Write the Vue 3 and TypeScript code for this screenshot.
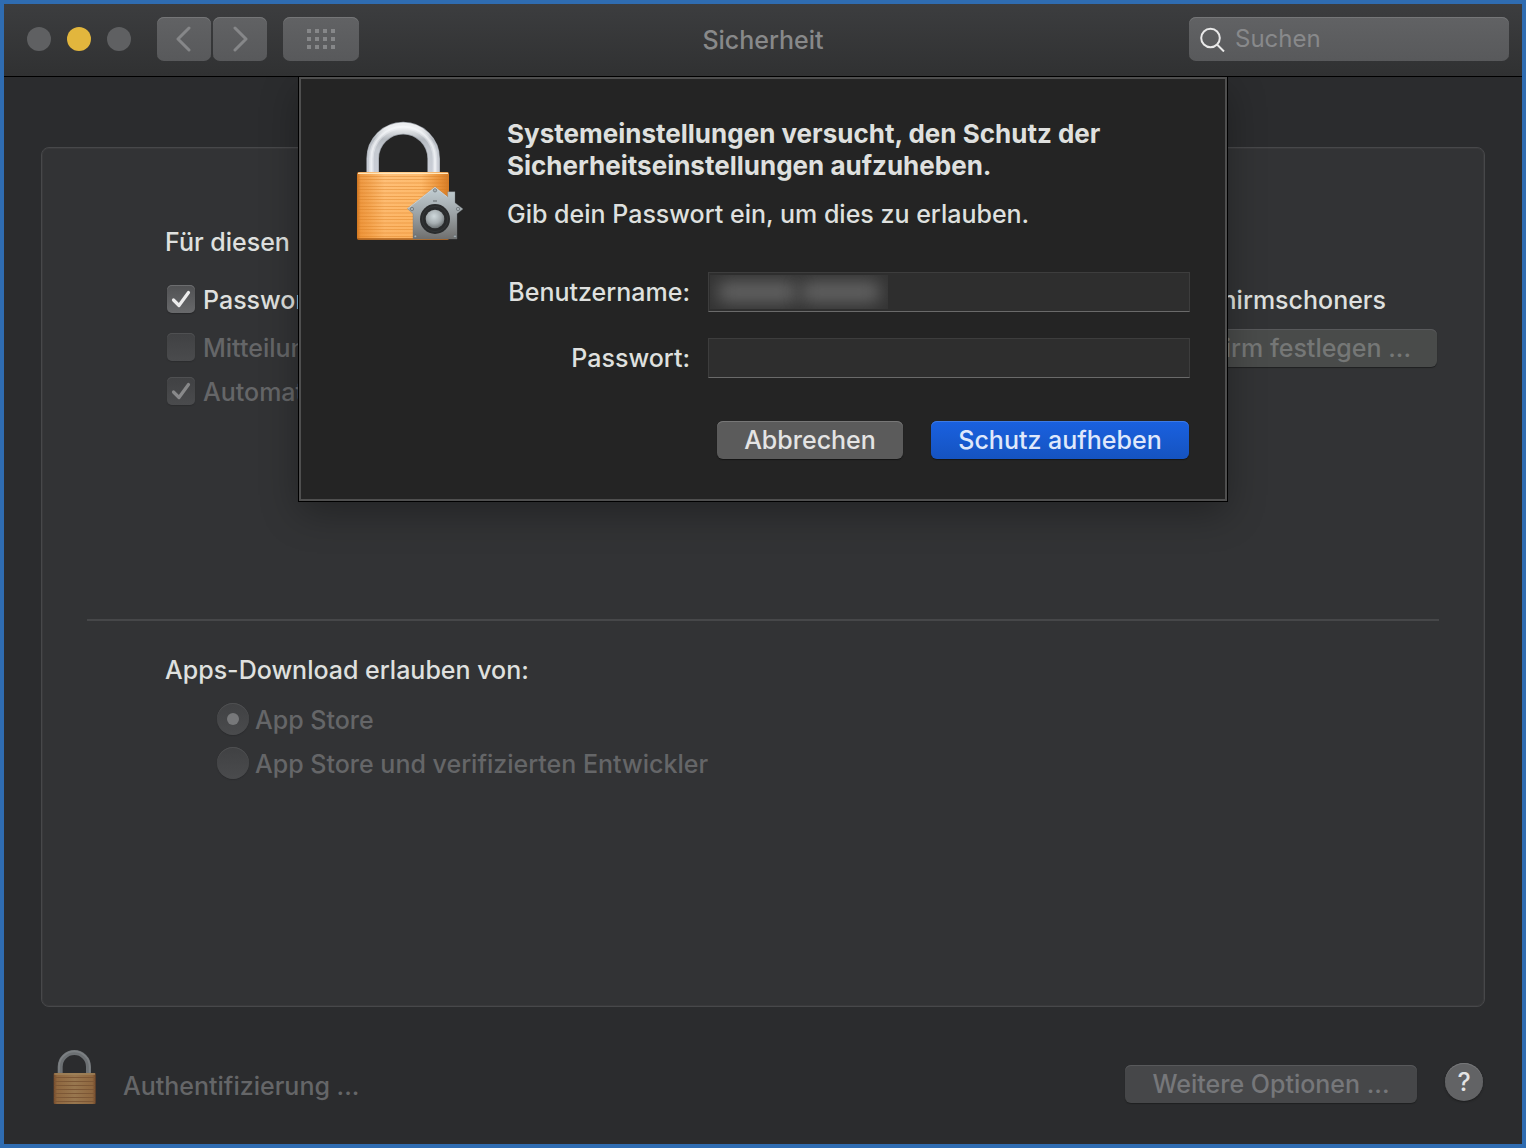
<script setup lang="ts">
import { ref } from 'vue'

interface Option {
  id: string
  label: string
}

const query = ref('')
const password = ref('')
const requirePassword = ref(true)
const showMessage = ref(false)
const autoLogin = ref(true)
const source = ref('store')

const sources: Option[] = [
  { id: 'store', label: 'App Store' },
  { id: 'verified', label: 'App Store und verifizierten Entwickler' },
]

const gridDots: { x: number; y: number }[] = []
for (const y of [0, 8, 16]) {
  for (const x of [0, 8, 16, 24]) gridDots.push({ x, y })
}

const grooves = Array.from({ length: 19 }, (_, i) => 228 + i * 10)
const smallGrooves = Array.from({ length: 7 }, (_, i) => 291 + i * 12)
</script>

<template>
  <div class="window">
    <header class="titlebar">
      <div class="left">
        <div class="lights">
          <button class="light" type="button" aria-label="Schließen"></button>
          <button class="light yellow" type="button" aria-label="Minimieren"></button>
          <button class="light" type="button" aria-label="Zoomen"></button>
        </div>
        <div class="nav">
          <button class="tool" type="button" aria-label="Zurück">
            <svg width="16" height="26" viewBox="0 0 16 26"><path d="M13 2 2 13l11 11" /></svg>
          </button>
          <button class="tool" type="button" aria-label="Vor">
            <svg width="16" height="26" viewBox="0 0 16 26"><path d="M3 2l11 11L3 24" /></svg>
          </button>
        </div>
        <button class="tool wide" type="button" aria-label="Alle einblenden">
          <svg width="28" height="20" viewBox="0 0 28 20">
            <rect v-for="(d, i) in gridDots" :key="i" :x="d.x" :y="d.y" width="4" height="4" />
          </svg>
        </button>
      </div>
      <h1 class="title">Sicherheit</h1>
      <label class="search">
        <svg width="26" height="26" viewBox="0 0 26 26"><circle cx="11.500" cy="12" r="9.300" /><path d="M18 18.500l7 7" /></svg>
        <input v-model="query" type="search" placeholder="Suchen" aria-label="Suchen" />
      </label>
    </header>

    <main class="content">
      <section class="panel">
        <h2 class="heading">Für diesen</h2>
        <div class="row first">
          <label class="option">
            <input v-model="requirePassword" type="checkbox" />
            <span>Passwort</span>
          </label>
          <span class="trailing">Bildschirmschoners</span>
        </div>
        <div class="row message">
          <label class="option disabled">
            <input v-model="showMessage" type="checkbox" disabled />
            <span>Mitteilung</span>
          </label>
          <button class="push green" type="button" disabled>Bildschirm festlegen ...</button>
        </div>
        <div class="row">
          <label class="option disabled">
            <input v-model="autoLogin" type="checkbox" disabled />
            <span>Automatisch</span>
          </label>
        </div>

        <hr />

        <h2 class="heading">Apps-Download erlauben von:</h2>
        <div class="sources">
          <label v-for="s in sources" :key="s.id" class="option disabled">
            <input v-model="source" type="radio" name="source" :value="s.id" disabled />
            <span>{{ s.label }}</span>
          </label>
        </div>
      </section>

      <footer class="footer">
        <svg class="smalllock" width="50" height="56" viewBox="150 204 150 168">
          <defs>
            <linearGradient id="smallBody" x1="0" x2="1" y1="0" y2="0">
              <stop offset="0" stop-color="#74492a" />
              <stop offset="0.080" stop-color="#8f673f" />
              <stop offset="0.500" stop-color="#98774f" />
              <stop offset="0.920" stop-color="#8f673f" />
              <stop offset="1" stop-color="#74492a" />
            </linearGradient>
          </defs>
          <path d="M180.500 280V260A42.500 42.500 0 0 1 265.500 260V280" fill="none" stroke="#6c7073" stroke-width="15" />
          <path d="M177 278V260A46 46 0 0 1 269 260V278" fill="none" stroke="#7c8083" stroke-width="5" />
          <rect x="161" y="279" width="126" height="93" rx="3" fill="url(#smallBody)" />
          <rect x="163" y="280" width="122" height="4" fill="#a0855d" />
          <rect v-for="y in smallGrooves" :key="y" x="163" :y="y" width="122" height="3" fill="#7c5736" />
        </svg>
        <span class="status">Authentifizierung ...</span>
        <button class="push more" type="button" disabled>Weitere Optionen ...</button>
        <button class="help" type="button" aria-label="Hilfe">?</button>
      </footer>

      <form class="sheet" role="dialog" aria-labelledby="sheet-title" @submit.prevent>
        <svg class="lock" width="120" height="130" viewBox="60 54 360 390">
          <defs>
            <linearGradient id="body" x1="0" x2="1" y1="0" y2="0">
              <stop offset="0" stop-color="#c8701f" />
              <stop offset="0.040" stop-color="#ee9a45" />
              <stop offset="0.120" stop-color="#f3a553" />
              <stop offset="0.300" stop-color="#ffc17a" />
              <stop offset="0.700" stop-color="#ffbd70" />
              <stop offset="0.900" stop-color="#e9923a" />
              <stop offset="1" stop-color="#d27a27" />
            </linearGradient>
            <linearGradient id="shade" x1="0" x2="0" y1="0" y2="1">
              <stop offset="0" stop-color="#f28f20" stop-opacity="0" />
              <stop offset="1" stop-color="#f08a20" stop-opacity="0.250" />
            </linearGradient>
            <linearGradient id="shackle" x1="0" x2="0" y1="0" y2="1">
              <stop offset="0" stop-color="#eceef0" />
              <stop offset="0.250" stop-color="#b4b9bf" />
              <stop offset="0.500" stop-color="#c5cad1" />
              <stop offset="1" stop-color="#c9cdd6" />
            </linearGradient>
            <linearGradient id="house" x1="0" x2="0" y1="0" y2="1">
              <stop offset="0" stop-color="#c4d0d5" />
              <stop offset="0.500" stop-color="#9ea5a8" />
              <stop offset="1" stop-color="#6f6f6e" />
            </linearGradient>
            <radialGradient id="knob" cx="0.450" cy="0.350" r="0.650">
              <stop offset="0" stop-color="#cfd9dc" />
              <stop offset="0.600" stop-color="#a5adb0" />
              <stop offset="1" stop-color="#6d7375" />
            </radialGradient>
          </defs>
          <path d="M128 218V176A91.500 91.500 0 0 1 311 176V218" fill="none" stroke="#9a9fa6" stroke-width="38" />
          <path d="M128 218V176A91.500 91.500 0 0 1 311 176V218" fill="none" stroke="url(#shackle)" stroke-width="34" />
          <path d="M124 216V176A95.500 95.500 0 0 1 315 176V216" fill="none" stroke="#eff1f5" stroke-width="14" opacity="0.500" />
          <path d="M124 216V176A95.500 95.500 0 0 1 315 176V216" fill="none" stroke="#fafbfd" stroke-width="6" opacity="0.500" />
          <rect x="81" y="216" width="276" height="203" rx="6" fill="url(#body)" />
          <rect v-for="y in grooves" :key="y" x="82" :y="y" width="274" height="2" fill="#d67b22" opacity="0.600" />
          <rect x="81" y="216" width="276" height="203" rx="6" fill="url(#shade)" />
          <rect x="84" y="218" width="270" height="4" fill="#ffe6bb" />
          <rect x="83" y="415" width="272" height="4" fill="#a65a16" />
          <path d="M315 261 353 291V275H375V308L399 327 381 341V417H249V341L232 326Z" fill="url(#house)" stroke="#6f777a" stroke-width="1" />
          <path d="M233 326 315 262 352 291" fill="none" stroke="#dde6ea" stroke-width="2" />
          <g fill="#a8b1b5" stroke="#626a6e" stroke-width="2">
            <circle cx="315" cy="271" r="5" />
            <circle cx="246" cy="327" r="5" />
            <circle cx="384" cy="327" r="5" />
            <circle cx="256" cy="409" r="4" />
            <circle cx="375" cy="409" r="4" />
          </g>
          <rect x="309" y="301" width="12" height="4" fill="#737b7e" />
          <circle cx="315" cy="357" r="45" fill="#292b2c" />
          <circle cx="315" cy="357" r="38" fill="none" stroke="#333637" stroke-width="3" />
          <circle cx="315" cy="357" r="28" fill="url(#knob)" />
        </svg>
        <div class="sheetbody">
          <h2 id="sheet-title" class="question">
            Systemeinstellungen versucht, den Schutz der<br />Sicherheitseinstellungen aufzuheben.
          </h2>
          <p class="hint">Gib dein Passwort ein, um dies zu erlauben.</p>
          <div class="fields">
            <label for="user">Benutzername:</label>
            <div class="userfield">
              <input id="user" type="text" autocomplete="off" />
              <span class="redacted" aria-hidden="true"><i></i><i></i></span>
            </div>
            <label for="pass">Passwort:</label>
            <input id="pass" v-model="password" type="password" autocomplete="off" />
          </div>
          <div class="actions">
            <button class="push cancel" type="button">Abbrechen</button>
            <button class="push primary" type="submit">Schutz aufheben</button>
          </div>
        </div>
      </form>
    </main>
  </div>
</template>

<style>
html {
  background: #2f6cb1;
}
</style>

<style scoped>
* {
  box-sizing: border-box;
}

.window {
  display: flex;
  flex-direction: column;
  min-height: 100vh;
  border: 4px solid #2f6cb1;
  background: #2b2c2e;
  color: #dfe0df;
  font: 500 25px/32px Inter, "Liberation Sans", sans-serif;
}

button,
input {
  margin: 0;
  padding: 0;
  border: 0;
  font: inherit;
  color: inherit;
}

h1,
h2,
p {
  margin: 0;
  font-size: inherit;
  font-weight: inherit;
}

.titlebar {
  position: relative;
  z-index: 2;
  display: grid;
  grid-template-columns: 1fr auto 1fr;
  align-items: start;
  height: 73px;
  padding: 13px 13px 0;
  border-bottom: 1px solid #000;
  background: linear-gradient(#3c3d3f, #303132);
}

.left {
  display: flex;
  gap: 16px;
  margin-left: 10px;
}

.lights {
  display: flex;
  align-items: center;
  gap: 16px;
  margin-right: 10px;
}

.light {
  width: 24px;
  height: 24px;
  border-radius: 50%;
  background: #5f6062;
}

.light.yellow {
  background: #e2b63d;
}

.nav {
  display: flex;
  gap: 2px;
}

.tool {
  display: flex;
  align-items: center;
  justify-content: center;
  width: 54px;
  height: 44px;
  border-radius: 7px;
  background: linear-gradient(#616264, #58595b);
  box-shadow: inset 0 1px 0 #757678;
}

.tool.wide {
  width: 76px;
}

.tool path {
  fill: none;
  stroke: #868789;
  stroke-width: 3;
  stroke-linecap: round;
  stroke-linejoin: round;
}

.tool rect {
  fill: #868789;
}

.title {
  padding-top: 7px;
  color: #88898a;
}

.search {
  display: flex;
  align-items: center;
  gap: 10px;
  justify-self: end;
  width: 320px;
  height: 44px;
  padding: 0 10px;
  border-radius: 7px;
  background: linear-gradient(#616264, #58595b);
  box-shadow: inset 0 1px 0 #757678;
}

.search svg {
  flex: none;
  fill: none;
  stroke: #e9e9e9;
  stroke-width: 2;
}

.search input {
  flex: 1;
  min-width: 0;
  background: none;
  outline: none;
  appearance: none;
  font-size: 24px;
  font-weight: 400;
}

.search input::placeholder {
  color: #88898b;
  opacity: 1;
}

.content {
  position: relative;
  display: flex;
  flex: 1;
  flex-direction: column;
  padding-top: 70px;
}

.panel {
  flex: 1;
  margin: 0 37px;
  padding: 78px 45px 0;
  border: 1px solid #47484a;
  border-radius: 8px;
  background: #323335;
  box-shadow: inset 0 0 0 1px #39393b;
}

.heading {
  margin-left: 78px;
}

.row {
  display: flex;
  align-items: center;
  justify-content: space-between;
  margin-left: 80px;
}

.row.first {
  margin-top: 26px;
}

.row.message {
  margin: 13px 2px 9px 80px;
}

.trailing {
  margin-right: 53px;
}

.option {
  display: flex;
  align-items: center;
  gap: 8px;
}

.option.disabled {
  color: #656668;
}

.option input {
  display: grid;
  place-items: center;
  width: 28px;
  height: 28px;
  margin-bottom: 2px;
  border-radius: 5px;
  appearance: none;
  background: linear-gradient(#505153, #68696b);
  box-shadow: inset 0 1px 0 #6c6d6f, 0 1px 1px #252628;
}

.option input:disabled {
  background: linear-gradient(#404143, #4a4b4d);
  box-shadow: inset 0 1px 0 #4f5052, 0 1px 1px #2b2c2e;
}

.option input[type='checkbox']:checked::before {
  content: '';
  width: 28px;
  height: 28px;
  background: url("data:image/svg+xml,%3Csvg xmlns='http://www.w3.org/2000/svg' viewBox='0 0 28 28'%3E%3Cpath d='M6.500 15 12 20.500 21.500 7.500' fill='none' stroke='%23ececec' stroke-width='3.200' stroke-linecap='round' stroke-linejoin='round'/%3E%3C/svg%3E");
}

.option input[type='checkbox']:disabled:checked::before {
  opacity: 0.4;
}

hr {
  height: 2px;
  margin: 211px 0 33px;
  border: 0;
  background: #464749;
}

.sources {
  display: flex;
  flex-direction: column;
  gap: 10px;
  margin: 17px 0 0 130px;
}

.option input[type='radio'] {
  width: 32px;
  height: 32px;
  border-radius: 50%;
}

.sources .option {
  gap: 6px;
}

.option input[type='radio']:checked::before {
  content: '';
  width: 12px;
  height: 12px;
  border-radius: 50%;
  background: #77787a;
}

.push {
  height: 38px;
  padding: 0 26px;
  border-radius: 6px;
  background: #464749;
  box-shadow: inset 0 1px 0 #58595b, 0 1px 1px #1f2021;
  color: #76777a;
}

.push.green {
  background: #494b4a;
  color: #757776;
}

.footer {
  display: flex;
  align-items: flex-end;
  padding: 41px 39px 40px 46px;
}

.status {
  margin: 0 auto 2px 23px;
  color: #656668;
}

.push.more {
  width: 292px;
  margin: 0 28px 1px 0;
}

.help {
  width: 38px;
  height: 38px;
  margin-bottom: 3px;
  border-radius: 50%;
  background: #626365;
  box-shadow: inset 0 1px 0 #77787a, 0 1px 2px #1c1d1e;
  color: #e4e4e4;
}

.sheet {
  position: absolute;
  top: 0;
  left: 50%;
  z-index: 1;
  display: flex;
  gap: 37px;
  width: min(928px, 100%);
  padding: 39px 35px 40px 49px;
  border: 2px solid #4f4f4f;
  background: #242424;
  box-shadow: 0 0 0 1px #000, 0 12px 36px rgba(0, 0, 0, 0.3);
  transform: translateX(-50%);
}

.lock {
  flex: none;
}

.sheetbody {
  flex: 1;
}

.question {
  font-size: 26px;
  font-weight: 700;
  white-space: nowrap;
}

.hint {
  margin-top: 16px;
}

.fields {
  display: grid;
  grid-template-columns: 183px 1fr;
  gap: 26px 18px;
  align-items: center;
  margin-top: 42px;
}

.fields label {
  display: flex;
  justify-content: flex-end;
  white-space: nowrap;
}

.fields input {
  width: 100%;
  height: 40px;
  padding: 0 8px;
  border: 1px solid #3d3d3d;
  border-bottom-color: #6a6a6a;
  background: #2e2e2e;
  outline: none;
}

.userfield {
  position: relative;
  display: flex;
}

.redacted {
  position: absolute;
  top: 3px;
  left: 2px;
  display: flex;
  gap: 4px;
  width: 178px;
  height: 34px;
  padding: 6px 8px;
  overflow: hidden;
  background: #343434;
}

.redacted i {
  flex: 1;
  border-radius: 8px;
  background: #606060;
  filter: blur(8px);
}

.actions {
  display: flex;
  justify-content: flex-end;
  gap: 28px;
  margin: 43px 1px 0 0;
}

.push.cancel {
  width: 186px;
  background: #5b5b5b;
  box-shadow: inset 0 1px 0 #777, 0 1px 1px #151515;
  color: #e4e4e4;
}

.push.primary {
  width: 258px;
  background: linear-gradient(#1a61e0, #1553c0);
  box-shadow: inset 0 1px 0 #3d7ae6, 0 1px 1px #151515;
  color: #dfe8fb;
}
</style>
